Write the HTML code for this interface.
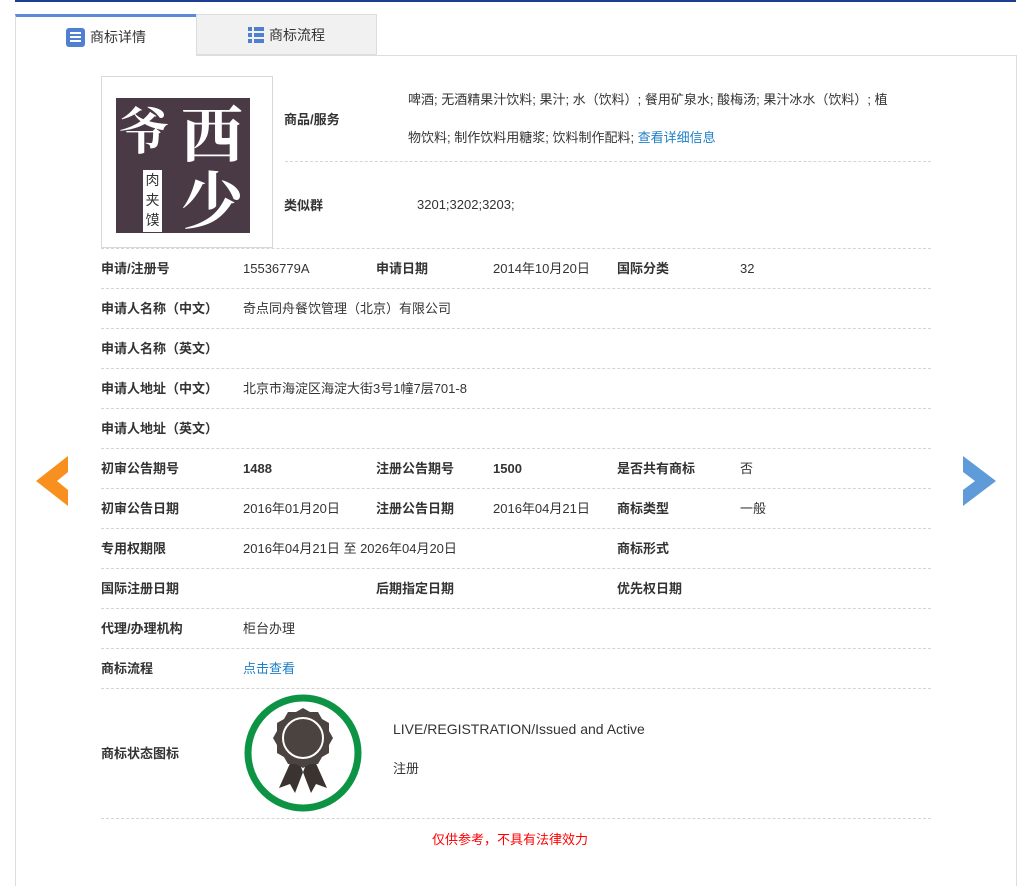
<!DOCTYPE html>
<html><head><meta charset="utf-8"><style>
body{margin:0;width:1031px;height:880px;background:#fff;font-family:"Liberation Sans","Noto Sans CJK SC",sans-serif;font-size:13px;color:#333;position:relative;overflow:hidden}
.a{position:absolute;white-space:nowrap;line-height:16px}
.b{font-weight:bold}
.dl{position:absolute;left:101px;width:830px;border-top:1px dashed #d4d4d4;height:0}
</style></head><body>
<div class="a" style="left:15px;top:0;width:1001px;height:2px;background:#1d3d92"></div>
<div class="a" style="left:15px;top:55px;width:1000px;height:830px;border-left:1px solid #ddd;border-right:1px solid #ddd;border-top:1px solid #ddd"></div>
<div class="a" style="left:15px;top:14px;width:181px;height:42px;background:#fff;border-left:1px solid #ddd;border-top:3px solid #5b8ad6;box-sizing:border-box"></div>
<div class="a" style="left:196px;top:14px;width:181px;height:41px;background:#f1f1f1;border:1px solid #ddd;box-sizing:border-box"></div>
<div class="a" style="left:66px;top:28px;width:19px;height:19px;background:#4e7fd1;border-radius:3px"></div>
<div class="a" style="left:70px;top:32px;width:11px;height:2px;background:#fff;box-shadow:0 4px 0 #fff,0 8px 0 #fff"></div>
<div class="a" style="left:90px;top:29px;font-size:14px">商标详情</div>
<div class="a" style="left:248px;top:27px;width:16px;height:16px;background:linear-gradient(#4e7fd1,#4e7fd1) 0 0/4px 4px no-repeat,linear-gradient(#4e7fd1,#4e7fd1) 0 6px/4px 4px no-repeat,linear-gradient(#4e7fd1,#4e7fd1) 0 12px/4px 4px no-repeat,linear-gradient(#4e7fd1,#4e7fd1) 6px 0/10px 4px no-repeat,linear-gradient(#4e7fd1,#4e7fd1) 6px 6px/10px 4px no-repeat,linear-gradient(#4e7fd1,#4e7fd1) 6px 12px/10px 4px no-repeat"></div>
<div class="a" style="left:269px;top:27px;font-size:14px">商标流程</div>

<div class="a" style="left:101px;top:76px;width:170px;height:170px;border:1px solid #d8d8d8"></div>
<div class="a" style="left:116px;top:98px;width:134px;height:135px;background:#4a3a45"></div>
<div class="a" style="left:119px;top:100px;color:#fff;font-size:50px;line-height:56px;font-family:'Noto Serif CJK SC',serif;font-weight:bold">爷</div>
<div class="a" style="left:181px;top:98px;color:#fff;font-size:62px;font-family:'Noto Serif CJK SC',serif;font-weight:bold;line-height:66px">西<br>少</div>
<div class="a" style="left:143px;top:170px;width:19px;height:62px;background:#fff;color:#333;font-size:14px;line-height:20px;text-align:center">肉<br>夹<br>馍</div>

<div class="a b" style="left:284px;top:112px">商品/服务</div>
<div class="a" style="left:408px;top:81px;line-height:38px">啤酒; 无酒精果汁饮料; 果汁; 水（饮料）; 餐用矿泉水; 酸梅汤; 果汁冰水（饮料）; 植<br>物饮料; 制作饮料用糖浆; 饮料制作配料; <span style="color:#1e7fc8">查看详细信息</span></div>
<div class="dl" style="left:285px;width:646px;top:161px"></div>
<div class="a b" style="left:284px;top:198px">类似群</div>
<div class="a" style="left:417px;top:197px">3201;3202;3203;</div>
<div class="dl" style="top:248px"></div>

<div class="a b" style="left:101px;top:261px">申请/注册号</div><div class="a" style="left:243px;top:261px">15536779A</div>
<div class="a b" style="left:376px;top:261px">申请日期</div><div class="a" style="left:493px;top:261px">2014年10月20日</div>
<div class="a b" style="left:617px;top:261px">国际分类</div><div class="a" style="left:740px;top:261px">32</div>
<div class="dl" style="top:288px"></div>
<div class="a b" style="left:101px;top:301px">申请人名称（中文）</div><div class="a" style="left:243px;top:301px">奇点同舟餐饮管理（北京）有限公司</div>
<div class="dl" style="top:328px"></div>
<div class="a b" style="left:101px;top:341px">申请人名称（英文）</div>
<div class="dl" style="top:368px"></div>
<div class="a b" style="left:101px;top:381px">申请人地址（中文）</div><div class="a" style="left:243px;top:381px">北京市海淀区海淀大街3号1幢7层701-8</div>
<div class="dl" style="top:408px"></div>
<div class="a b" style="left:101px;top:421px">申请人地址（英文）</div>
<div class="dl" style="top:448px"></div>
<div class="a b" style="left:101px;top:461px">初审公告期号</div><div class="a b" style="left:243px;top:461px">1488</div>
<div class="a b" style="left:376px;top:461px">注册公告期号</div><div class="a b" style="left:493px;top:461px">1500</div>
<div class="a b" style="left:617px;top:461px">是否共有商标</div><div class="a" style="left:740px;top:461px">否</div>
<div class="dl" style="top:488px"></div>
<div class="a b" style="left:101px;top:501px">初审公告日期</div><div class="a" style="left:243px;top:501px">2016年01月20日</div>
<div class="a b" style="left:376px;top:501px">注册公告日期</div><div class="a" style="left:493px;top:501px">2016年04月21日</div>
<div class="a b" style="left:617px;top:501px">商标类型</div><div class="a" style="left:740px;top:501px">一般</div>
<div class="dl" style="top:528px"></div>
<div class="a b" style="left:101px;top:541px">专用权期限</div><div class="a" style="left:243px;top:541px">2016年04月21日 至 2026年04月20日</div>
<div class="a b" style="left:617px;top:541px">商标形式</div>
<div class="dl" style="top:568px"></div>
<div class="a b" style="left:101px;top:581px">国际注册日期</div>
<div class="a b" style="left:376px;top:581px">后期指定日期</div>
<div class="a b" style="left:617px;top:581px">优先权日期</div>
<div class="dl" style="top:608px"></div>
<div class="a b" style="left:101px;top:621px">代理/办理机构</div><div class="a" style="left:243px;top:621px">柜台办理</div>
<div class="dl" style="top:648px"></div>
<div class="a b" style="left:101px;top:661px">商标流程</div><div class="a" style="left:243px;top:661px;color:#1e7fc8">点击查看</div>
<div class="dl" style="top:688px"></div>
<div class="a b" style="left:101px;top:746px">商标状态图标</div>
<svg class="a" style="left:243px;top:693px" width="120" height="120" viewBox="0 0 120 120">
<circle cx="60" cy="60" r="55" fill="none" stroke="#0c9444" stroke-width="7"/>
<path d="M49 66 L62 74 L52 100 L47 91 L36 95Z M71 66 L58 74 L68 100 L73 91 L84 95Z" fill="#3a3330"/>
<path d="M60 15 l7 4 8 0 4 7 7 4 0 8 4 7 -4 7 0 8 -7 4 -4 7 -8 0 -7 4 -7 -4 -8 0 -4 -7 -7 -4 0 -8 -4 -7 4 -7 0 -8 7 -4 4 -7 8 0Z" fill="#4b4340"/>
<circle cx="60" cy="45" r="20" fill="none" stroke="#fff" stroke-width="2"/>
</svg>
<div class="a" style="left:393px;top:721px;font-size:14px">LIVE/REGISTRATION/Issued and Active</div>
<div class="a" style="left:393px;top:761px">注册</div>
<div class="dl" style="top:818px"></div>
<div class="a" style="left:432px;top:832px;color:#f00">仅供参考，不具有法律效力</div>

<svg class="a" style="left:36px;top:456px" width="33" height="50"><polygon points="32,0 0,25 32,50 32,34 21,25 32,16" fill="#f7901e"/></svg>
<svg class="a" style="left:963px;top:456px" width="33" height="50"><polygon points="0,0 33,25 0,50 0,34 12,25 0,16" fill="#5f9bd8"/></svg>
</body></html>
